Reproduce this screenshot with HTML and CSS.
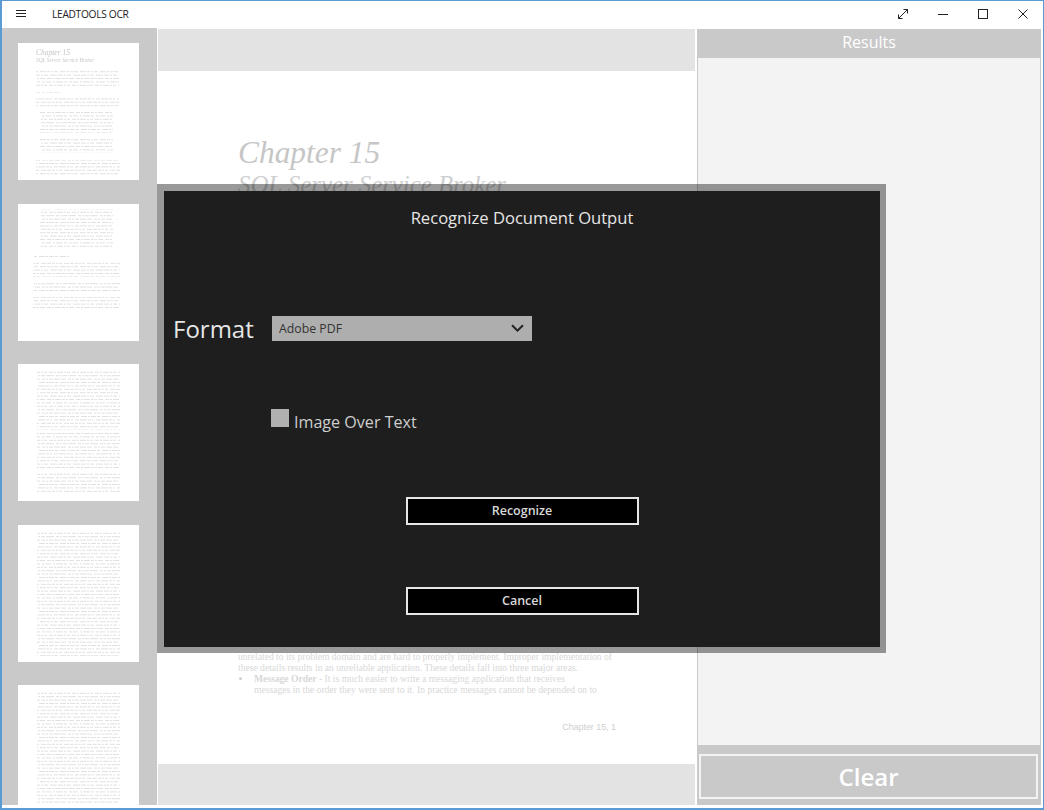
FILE: index.html
```html
<!DOCTYPE html>
<html lang="en">
<head>
<meta charset="utf-8">
<title>LEADTOOLS OCR</title>
<link rel="stylesheet" href="styles.css">
</head>
<body>
<div class="window">
  <header class="titlebar">
    <svg class="menu-icon" width="12" height="9" viewBox="0 0 12 9"><path d="M1 1.5H11M1 4.5H11M1 7.5H11" stroke="#222" stroke-width="1" fill="none"/></svg>
    <span class="app-title">LEADTOOLS OCR</span>
    <div class="win-controls">
      <span class="win-btn"><svg width="12" height="12" viewBox="0 0 12 12" fill="none" stroke="#222" stroke-width="1"><path d="M1.5 10.5L10.5 1.5M6.5 1.5H10.5V5.5M1.5 6.5V10.5H5.5"/></svg></span>
      <span class="win-btn"><svg width="12" height="12" viewBox="0 0 12 12" fill="none" stroke="#222" stroke-width="1"><path d="M1 6.5H11"/></svg></span>
      <span class="win-btn"><svg width="12" height="12" viewBox="0 0 12 12" fill="none" stroke="#222" stroke-width="1"><rect x="1.5" y="1.5" width="9" height="9"/></svg></span>
      <span class="win-btn"><svg width="12" height="12" viewBox="0 0 12 12" fill="none" stroke="#222" stroke-width="1"><path d="M1.5 1.5L10.5 10.5M10.5 1.5L1.5 10.5"/></svg></span>
    </div>
  </header>

  <main class="workspace">
    <aside class="sidebar">
      <div class="thumb">
        <svg width="121" height="137" viewBox="0 0 121 137">
          <defs>
            <pattern id="txt" patternUnits="userSpaceOnUse" width="110" height="34">
              <g fill="none" stroke="#e0e0e0" stroke-width="1">
                <path d="M0 1.5H110" stroke-dasharray="4 1 2 1 6 1 3 1 2 1 5 2"/>
                <path d="M0 4.9H110" stroke-dasharray="3 1 5 2 2 1 7 1 3 2" stroke-dashoffset="3"/>
                <path d="M0 8.3H110" stroke-dasharray="6 1 2 1 3 2 4 1 2 1" stroke-dashoffset="7"/>
                <path d="M0 11.7H110" stroke-dasharray="2 1 4 1 8 2 3 1" stroke-dashoffset="2"/>
                <path d="M0 15.1H110" stroke-dasharray="5 2 3 1 2 1 4 1 6 1" stroke-dashoffset="9"/>
                <path d="M0 18.5H110" stroke-dasharray="3 2 6 1 2 1 5 1" stroke-dashoffset="5"/>
                <path d="M0 21.9H110" stroke-dasharray="7 1 3 1 2 2 4 1" stroke-dashoffset="1"/>
                <path d="M0 25.3H110" stroke-dasharray="2 1 3 2 5 1 4 1 3 1" stroke-dashoffset="8"/>
                <path d="M0 28.7H110" stroke-dasharray="4 2 6 1 3 1 2 1" stroke-dashoffset="4"/>
                <path d="M0 32.1H110" stroke-dasharray="5 1 2 1 4 2 7 1" stroke-dashoffset="6"/>
              </g>
            </pattern>
          </defs>
          <text class="thumb-h1" x="18" y="12">Chapter 15</text>
          <text class="thumb-h2" x="18" y="19">SQL Server Service Broker</text>
          <rect x="18" y="27" width="83" height="16" fill="url(#txt)"/>
          <rect x="18" y="49" width="26" height="3" fill="url(#txt)"/>
          <rect x="18" y="55" width="83" height="10" fill="url(#txt)"/>
          <rect x="22" y="69" width="73" height="21" fill="url(#txt)"/>
          <rect x="22" y="95" width="73" height="15" fill="url(#txt)"/>
          <rect x="18" y="117" width="84" height="15" fill="url(#txt)"/>
        </svg>
      </div>
      <div class="thumb">
        <svg width="121" height="137" viewBox="0 0 121 137">
          <rect x="22" y="5" width="73" height="38" fill="url(#txt)"/>
          <rect x="15" y="52" width="37" height="3" fill="url(#txt)"/>
          <rect x="15" y="57" width="87" height="16" fill="url(#txt)"/>
          <rect x="15" y="77" width="87" height="11" fill="url(#txt)"/>
          <rect x="15" y="93" width="87" height="11" fill="url(#txt)"/>
        </svg>
      </div>
      <div class="thumb">
        <svg width="121" height="137" viewBox="0 0 121 137">
          <rect x="19" y="6" width="83" height="60" fill="url(#txt)"/>
          <rect x="19" y="68" width="83" height="36" fill="url(#txt)"/>
          <rect x="19" y="108" width="83" height="21" fill="url(#txt)"/>
        </svg>
      </div>
      <div class="thumb">
        <svg width="121" height="137" viewBox="0 0 121 137">
          <rect x="19" y="6" width="83" height="125" fill="url(#txt)"/>
        </svg>
      </div>
      <div class="thumb">
        <svg width="121" height="137" viewBox="0 0 121 137">
          <rect x="19" y="6" width="83" height="125" fill="url(#txt)"/>
        </svg>
      </div>
    </aside>

    <section class="viewer">
      <div class="viewer-bar"></div>
      <div class="page">
        <div class="page-heading">Chapter 15</div>
        <div class="page-subheading">SQL Server Service Broker</div>
        <div class="page-body">
          <p class="page-line">unrelated to its problem domain and are hard to properly implement. Improper implementation of</p>
          <p class="page-line">these details results in an unreliable application. These details fall into three major areas.</p>
          <p class="page-line page-bullet"><b>Message Order</b> - It is much easier to write a messaging application that receives</p>
          <p class="page-line page-cont">messages in the order they were sent to it. In practice messages cannot be depended on to</p>
        </div>
        <div class="page-number">Chapter 15, 1</div>
      </div>
      <div class="viewer-bar viewer-bar-bottom"></div>
    </section>

    <section class="results">
      <div class="results-head">Results</div>
      <div class="results-list"></div>
      <div class="results-foot"><button class="clear-btn" type="button">Clear</button></div>
    </section>
  </main>

  <div class="modal">
    <h1 class="modal-title">Recognize Document Output</h1>
    <div class="format-row">
      <span class="format-label">Format</span>
      <div class="select">
        <span>Adobe PDF</span>
        <svg width="13" height="8" viewBox="0 0 13 8" fill="none" stroke="#222" stroke-width="2"><path d="M1 1.2L6.5 6.6L12 1.2"/></svg>
      </div>
    </div>
    <div class="check-row">
      <span class="checkbox"></span>
      <span class="check-label">Image Over Text</span>
    </div>
    <button class="modal-btn recognize" type="button">Recognize</button>
    <button class="modal-btn cancel" type="button">Cancel</button>
  </div>
</div>
</body>
</html>
```
FILE: styles.css
```css
* { box-sizing: border-box; }
html, body { margin: 0; padding: 0; }
body { font-family: "Open Sans", "Noto Sans", sans-serif; background: #fff; }

.window {
  position: relative;
  width: 1044px;
  height: 810px;
  display: flex;
  flex-direction: column;
  overflow: hidden;
  background: #fff;
  border-style: solid;
  border-color: #5a9bd3;
  border-width: 1px 1px 2px 2px;
}

.titlebar {
  flex: none;
  height: 27px;
  padding: 0 0 2px 13px;
  display: flex;
  align-items: center;
}
.menu-icon { flex: none; }
.app-title {
  margin-left: 25px;
  font-size: 10.2px;
  letter-spacing: -0.3px;
  color: #222;
}
.win-controls { margin-left: auto; display: flex; }
.win-btn {
  width: 40px;
  height: 25px;
  display: flex;
  align-items: center;
  justify-content: center;
}

.workspace { flex: 1; display: flex; min-height: 0; margin-bottom: 3px; }

.sidebar {
  flex: none;
  width: 155px;
  padding: 15px 0 0 16px;
  display: flex;
  flex-direction: column;
  gap: 23.5px;
  overflow: hidden;
  background: #c9c9c9;
}
.thumb { flex: none; width: 121px; height: 137px; background: #fff; }
.thumb svg { display: block; filter: blur(0.35px); }
.thumb-h1 { font: italic 7.5px "Liberation Serif", serif; fill: #c4c4c4; }
.thumb-h2 { font: italic 5.4px "Liberation Serif", serif; fill: #c8c8c8; }

.viewer {
  flex: none;
  width: 537px;
  margin-left: 1px;
  padding-top: 1px;
  display: flex;
  flex-direction: column;
}
.viewer-bar { flex: none; height: 42px; background: #e3e3e3; }
.viewer-bar-bottom { height: 41px; }
.page {
  flex: 1;
  min-height: 0;
  padding-left: 80px;
  overflow: hidden;
  background: #fff;
}
.page-heading {
  margin-top: 62px;
  font: italic 31.4px/40px "Liberation Serif", serif;
  color: #c6c6c6;
}
.page-subheading {
  margin-top: -3px;
  font: italic 24.8px/30px "Liberation Serif", serif;
  color: #cfcfcf;
}
.page-body { margin-top: 451px; }
.page-line {
  margin: 0;
  font: 9.6px/11px "Liberation Serif", serif;
  color: #d8d8d8;
  white-space: nowrap;
}
.page-line b { font-weight: bold; }
.page-bullet { position: relative; padding-left: 16px; }
.page-bullet::before {
  content: "";
  position: absolute;
  left: 1px;
  top: 4px;
  width: 3px;
  height: 3px;
  border-radius: 50%;
  background: #d0d0d0;
}
.page-cont { padding-left: 16px; }
.page-number {
  margin-top: 25px;
  width: 378px;
  text-align: right;
  font: 8.9px/14px "Liberation Sans", sans-serif;
  color: #cfcfcf;
}

.results {
  flex: none;
  width: 344px;
  margin-left: 2px;
  display: flex;
  flex-direction: column;
}
.results-head {
  flex: none;
  height: 29px;
  margin-top: 1px;
  background: #c9c9c9;
  color: #fff;
  text-align: center;
  font-size: 16px;
  line-height: 27px;
}
.results-list {
  flex: 1;
  min-height: 0;
  background: #f3f3f3;
  border-left: 1px solid #c9c9c9;
  border-right: 1px solid #c9c9c9;
}
.results-foot {
  flex: none;
  height: 60px;
  padding: 9px 3px 6px 2px;
  background: #c9c9c9;
}
.clear-btn {
  display: block;
  width: 100%;
  height: 45px;
  padding: 0;
  background: #c9c9c9;
  border: 2px solid #f3f3f3;
  color: #fff;
  font-family: inherit;
  font-size: 24px;
  font-weight: 600;
  line-height: 38px;
}

.modal {
  position: absolute;
  left: 155px;
  top: 183px;
  width: 729px;
  height: 469px;
  padding: 15px 0 0;
  display: flex;
  flex-direction: column;
  align-items: center;
  background: #1e1e1e;
  background-clip: padding-box;
  border-style: solid;
  border-color: rgba(0, 0, 0, 0.4);
  border-width: 7px 6px 6px 7px;
}
.modal-title {
  margin: 0;
  font-size: 16.6px;
  font-weight: 400;
  line-height: 24px;
  color: #e6e6e6;
}
.format-row {
  align-self: flex-start;
  margin: 86px 0 0 9px;
  display: flex;
  align-items: center;
  height: 25px;
}
.format-label {
  width: 99px;
  font-size: 24px;
  color: #e6e6e6;
}
.select {
  width: 260px;
  height: 25px;
  padding: 0 8px 1px 7px;
  display: flex;
  align-items: center;
  justify-content: space-between;
  background: #aeaeae;
  color: #333;
  font-size: 12.3px;
}
.check-row {
  align-self: flex-start;
  margin: 68px 0 0 107px;
  display: flex;
  align-items: flex-start;
}
.checkbox { width: 18px; height: 18px; background: #b0b0b0; }
.check-label {
  margin: 1px 0 0 5px;
  font-size: 16.1px;
  line-height: 24px;
  color: #cfcfcf;
}
.modal-btn {
  display: block;
  width: 233px;
  height: 28px;
  padding: 0 0 1px;
  background: #000;
  border: 2px solid #e6e6e6;
  color: #d8d8d8;
  font-family: inherit;
  font-size: 12.5px;
  font-weight: 600;
}
.recognize { margin-top: 63px; }
.cancel { margin-top: 62px; }
```
